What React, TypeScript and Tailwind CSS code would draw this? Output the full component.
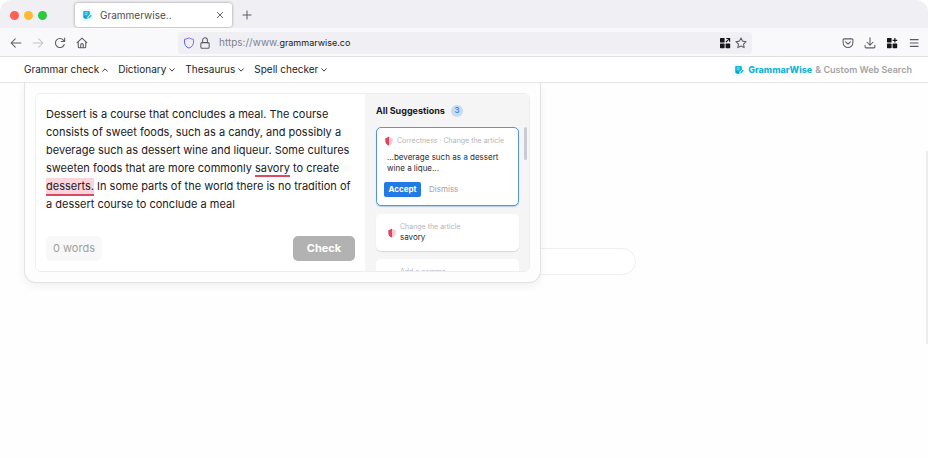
import type { ReactNode } from "react";

const NAV_ITEMS = [
  { label: "Grammar check", open: true },
  { label: "Dictionary", open: false },
  { label: "Thesaurus", open: false },
  { label: "Spell checker", open: false },
];

function Icon({ size = 12, width = 1.4, children }: { size?: number; width?: number; children: ReactNode }) {
  return (
    <svg
      viewBox="0 0 16 16"
      width={size}
      height={size}
      fill="none"
      stroke="currentColor"
      strokeWidth={width}
      strokeLinecap="round"
      strokeLinejoin="round"
      className="shrink-0"
      aria-hidden="true"
    >
      {children}
    </svg>
  );
}

function Logo() {
  return (
    <svg viewBox="0 0 12 12" width={12} height={12} className="shrink-0" aria-hidden="true">
      <rect width="12" height="12" rx="2" fill="#eefafd" />
      <path d="M3 2h4.700a1.200 1.200 0 0 1 1.200 1.200v2.400L6.400 8.100v1.700H4A1.800 1.800 0 0 1 2.200 8V2.800A.8.8 0 0 1 3 2z" fill="#14b4d8" />
      <path d="M3.800 3.800h3.200M3.800 5.400h2.400" stroke="#b9ecf7" strokeWidth=".7" />
      <path d="M7.200 9.400l.4-1.400 2.200-2.200 1 1-2.200 2.200z" fill="#14b4d8" />
      <path d="M3 7c.8 1.500 2 2 3.300 2.200" fill="none" stroke="#087fa5" strokeWidth=".8" />
    </svg>
  );
}

function GridIcon({ variant }: { variant: "arrow" | "plus" }) {
  return (
    <svg viewBox="0 0 12 12" width={12} height={12} fill="#18181b" className="shrink-0" aria-hidden="true">
      <rect x="1" y="1" width="4.6" height="4.6" rx=".6" />
      <rect x="1" y="6.6" width="4.6" height="4.6" rx=".6" />
      <rect x="6.6" y="6.6" width="4.6" height="4.6" rx=".6" />
      {variant === "arrow" ? (
        <path d="M6.900 5.200L10 2.100M7.300 1.500h3.300v3.300" fill="none" stroke="#18181b" strokeWidth="1.200" />
      ) : (
        <path d="M8.9 1v4.6M6.6 3.3h4.6" stroke="#18181b" strokeWidth="1.2" />
      )}
    </svg>
  );
}

function HalfShield() {
  return (
    <svg viewBox="0 0 8 10" width={8} height={10} className="shrink-0" aria-hidden="true">
      <path d="M4 .5v9C1.800 8.900.3 7.400.3 5V2.200C1.700 1.900 3 1.200 4 .5z" fill="#dc4560" />
      <path d="M4 .5v9C6.200 8.900 7.700 7.400 7.700 5V2.200C6.300 1.900 5 1.200 4 .5z" fill="#fbc9d2" />
    </svg>
  );
}

function TabStrip() {
  return (
    <div className="flex h-7 items-start bg-[#f0f0f4] pl-[10px]">
      <div className="mt-[11px] flex gap-[5px]">
        <span className="size-[9px] rounded-full bg-[#fe6057]" />
        <span className="size-[9px] rounded-full bg-[#fdbc30]" />
        <span className="size-[9px] rounded-full bg-[#2bc840]" />
      </div>
      <div className="mt-[3px] ml-7 flex h-[24px] w-[157px] items-center rounded-[3px] bg-white pr-2 pl-[6px] shadow-[0_0_3px_rgba(0,0,0,0.4)]">
        <Logo />
        <span className="ml-[7px] text-[10px] text-[#4b4b52]">Grammerwise..</span>
        <button type="button" aria-label="Close tab" className="ml-auto text-[#55555c]">
          <Icon size={8} width={1.8}>
            <path d="M2.500 2.500l11 11M13.500 2.500l-11 11" />
          </Icon>
        </button>
      </div>
      <button type="button" aria-label="New tab" className="mt-[10px] ml-[10px] text-[#5b5b66]">
        <Icon size={10} width={1.6}>
          <path d="M8 1.500v13M1.500 8h13" />
        </Icon>
      </button>
    </div>
  );
}

function Toolbar() {
  return (
    <div className="flex h-[29px] items-center border-b border-[#dfdfe3] bg-[#f9f9fb] pt-px pr-2 pl-[10px] text-[#5b5b66]">
      <div className="flex w-[168px] shrink-0 items-center gap-[10px]">
        <button type="button" aria-label="Back">
          <Icon>
            <path d="M14.500 8H1.500M7 2.500L1.500 8 7 13.500" />
          </Icon>
        </button>
        <button type="button" aria-label="Forward" className="text-[#c3c3c8]">
          <Icon>
            <path d="M1.500 8h13M9 2.500L14.500 8 9 13.500" />
          </Icon>
        </button>
        <button type="button" aria-label="Reload">
          <Icon>
            <path d="M13.600 10A6 6 0 1 1 12.500 4.200L14 5.800M14.200 1.500v4.500H9.700" />
          </Icon>
        </button>
        <button type="button" aria-label="Home">
          <Icon>
            <path d="M1.500 7.500L8 1.500l6.500 6M3 6.500V13a1.300 1.300 0 0 0 1.300 1.300h7.400A1.300 1.300 0 0 0 13 13V6.500M6.300 14V10.500a1.700 1.700 0 0 1 3.400 0V14" />
          </Icon>
        </button>
      </div>
      <div className="flex h-[22px] min-w-0 flex-1 items-center rounded-[3px] bg-[#f0f0f4] px-[5px]">
        <svg viewBox="0 0 12 12" width={12} height={12} fill="none" className="shrink-0" aria-hidden="true">
          <defs>
            <linearGradient id="shield" x1="0" y1="1" x2="1" y2="0">
              <stop offset="0" stopColor="#3f62e8" />
              <stop offset="1" stopColor="#a06bf5" />
            </linearGradient>
          </defs>
          <path
            d="M6 .9c1.400.8 2.800 1.200 4.500 1.400v2.800c0 2.800-1.500 4.900-4.500 6-3-1.100-4.500-3.200-4.500-6V2.300C3.200 2.100 4.600 1.700 6 .9z"
            stroke="url(#shield)"
            strokeWidth="1"
          />
        </svg>
        <span className="ml-1">
          <Icon>
            <rect x="2.500" y="7.500" width="11" height="7.500" rx="1.300" />
            <path d="M4.800 7.500V4.300a3.200 3.200 0 0 1 6.400 0v3.200" />
          </Icon>
        </span>
        <label htmlFor="url" className="ml-2 text-[10px] text-[#808087]">
          https://www.
        </label>
        <input
          id="url"
          defaultValue="grammarwise.co"
          className="min-w-0 flex-1 bg-transparent text-[9px] text-[#18181b] outline-none"
        />
        <button type="button" aria-label="Apps">
          <GridIcon variant="arrow" />
        </button>
        <button type="button" aria-label="Bookmark" className="ml-1">
          <Icon>
            <path d="M8 1.200l2.100 4.300 4.700.7-3.400 3.300.8 4.700L8 12l-4.200 2.200.8-4.700L1.200 6.200l4.700-.7z" />
          </Icon>
        </button>
      </div>
      <div className="ml-[90px] flex shrink-0 items-center gap-[10px]">
        <button type="button" aria-label="Save to Pocket">
          <Icon>
            <path d="M2.800 2.500h10.400a1.300 1.300 0 0 1 1.300 1.300V7.500a6.500 6.500 0 0 1-13 0V3.800a1.300 1.300 0 0 1 1.300-1.300zM4.800 6.500L8 9.600l3.200-3.100" />
          </Icon>
        </button>
        <button type="button" aria-label="Downloads">
          <Icon>
            <path d="M8 1v9.500M4 7l4 4 4-4M1.500 11v2.200A1.300 1.300 0 0 0 2.800 14.500h10.400a1.300 1.300 0 0 0 1.300-1.300V11" />
          </Icon>
        </button>
        <button type="button" aria-label="Extensions">
          <GridIcon variant="plus" />
        </button>
        <button type="button" aria-label="Menu">
          <Icon>
            <path d="M3 3.500h10.500M3 8h10.500M3 12.500h10.500" />
          </Icon>
        </button>
      </div>
    </div>
  );
}

function SiteNav() {
  return (
    <header className="relative z-10 flex h-[26px] items-center justify-between border-b border-[#e6e6e6] bg-white pr-4 pl-6">
      <nav className="flex gap-[10px]">
        {NAV_ITEMS.map((item) => (
          <button
            key={item.label}
            type="button"
            aria-expanded={item.open}
            className="flex items-center gap-[3px] text-[10px] text-[#232326]"
          >
            {item.label}
            <Icon size={6} width={2.4}>
              <path d={item.open ? "M1.500 11.500L8 5l6.500 6.500" : "M1.500 4.500L8 11l6.500-6.500"} />
            </Icon>
          </button>
        ))}
      </nav>
      <a href="#" className="flex items-center text-[9px] font-semibold text-[#a3a3a6]">
        <Logo />
        <span className="mr-[3px] ml-[3px] font-extrabold text-[#14b4d8]">GrammarWise</span>
        &amp; Custom Web Search
      </a>
    </header>
  );
}

function Editor() {
  return (
    <div className="flex min-w-0 flex-1 flex-col bg-white px-[10px] pt-[11px] pb-[10px]">
      <p className="text-[11px] leading-[18px] text-[#202023]">
        Dessert is a course that concludes a meal. The course
        <br />
        consists of sweet foods, such as a candy, and possibly a
        <br />
        beverage such as dessert wine and liqueur. Some cultures
        <br />
        sweeten foods that are more commonly{" "}
        <span className="border-b-2 border-[#d84b63]">savory</span> to create
        <br />
        <span className="border-b-2 border-[#d84b63] bg-[#fcd5dc] py-px">desserts.</span> In some
        parts of the world there is no tradition of
        <br />a dessert course to conclude a meal
      </p>
      <div className="mt-auto flex items-center justify-between">
        <span className="rounded-[5px] bg-[#f8f8f8] px-[7px] py-1 text-[11px] leading-[17px] text-[#a0a0a0]">
          0 words
        </span>
        <button
          type="button"
          className="w-[62px] rounded-[5px] bg-[#b2b2b2] py-1 text-[11px] leading-[17px] font-bold text-white"
        >
          Check
        </button>
      </div>
    </div>
  );
}

function Suggestions() {
  return (
    <aside className="flex w-[164px] shrink-0 flex-col bg-[#f5f5f5] pt-[9px] pr-[2px] pl-[11px]">
      <h2 className="flex items-center gap-[6px] text-[9px] leading-[15px] font-bold text-[#18181b]">
        All Suggestions
        <span className="flex size-3 items-center justify-center rounded-full bg-[#c5dcf4] text-[8px] font-medium text-[#3a7cc9]">
          3
        </span>
      </h2>
      <div className="mt-[9px] flex min-h-0 flex-1 items-start justify-between">
        <ul className="flex w-[143px] flex-col gap-2">
          <li className="h-[79px] rounded-[5px] border border-[#5695da] bg-white px-[7px] pt-2 shadow-[0_1px_1px_rgba(86,149,218,0.4)]">
            <div className="flex items-center gap-1 pl-px text-[7px] leading-[10px] whitespace-nowrap text-[#b5b5b5]">
              <HalfShield />
              Correctness · Change the article
            </div>
            <p className="mt-[6px] pl-[3px] text-[8px] leading-[11px] whitespace-nowrap text-[#2b2b2e]">
              ...beverage such as <span className="font-bold text-[#2f7fd9]">a</span> dessert
              <br />
              wine a lique...
            </p>
            <div className="mt-[8px] flex items-center gap-2 text-[8px] leading-[15px]">
              <button type="button" className="w-[37px] rounded-[2px] bg-[#227be5] text-center font-bold text-white">
                Accept
              </button>
              <button type="button" className="text-[#a2a2a2]">
                Dismiss
              </button>
            </div>
          </li>
          <li className="flex h-[37px] items-start gap-1 rounded-[5px] bg-white pt-[7px] pl-3 shadow-[0_1px_1px_rgba(0,0,0,0.12)]">
            <span className="pt-[7px]">
              <HalfShield />
            </span>
            <div className="leading-[11px]">
              <div className="text-[7px] text-[#b5b5b5]">Change the article</div>
              <div className="text-[8px] text-[#2b2b2e]">savory</div>
            </div>
          </li>
          <li className="h-[37px] rounded-[5px] bg-white pt-[7px] pl-6 text-[7px] leading-[11px] text-[#b5b5b5]">
            Add a comma
          </li>
        </ul>
        <span className="h-[33px] w-[3px] rounded-full bg-[#c9cdd3]" />
      </div>
    </aside>
  );
}

export default function App() {
  return (
    <div className="relative flex min-h-screen flex-col overflow-hidden rounded-t-xl bg-[#fefefe] font-['Inter',sans-serif]">
      <TabStrip />
      <Toolbar />
      <SiteNav />
      <main className="relative flex-1 pr-6 pl-6">
        <input
          type="search"
          aria-label="Search"
          className="absolute top-[165px] left-[400px] h-[27px] w-[236px] rounded-full border border-[#efefef] bg-white px-4 text-[10px] outline-none"
        />
        <section className="relative max-w-[517px] rounded-b-xl border border-t-0 border-[#e2e2e2] bg-[#fdfdfd] p-[10px] shadow-[0_3px_8px_rgba(0,0,0,0.06)]">
          <div className="flex h-[179px] overflow-hidden rounded-md border border-[#eeeeee]">
            <Editor />
            <Suggestions />
          </div>
        </section>
        <span className="absolute top-[68px] right-0 h-[193px] w-[2px] bg-[#ededed]" />
      </main>
    </div>
  );
}
